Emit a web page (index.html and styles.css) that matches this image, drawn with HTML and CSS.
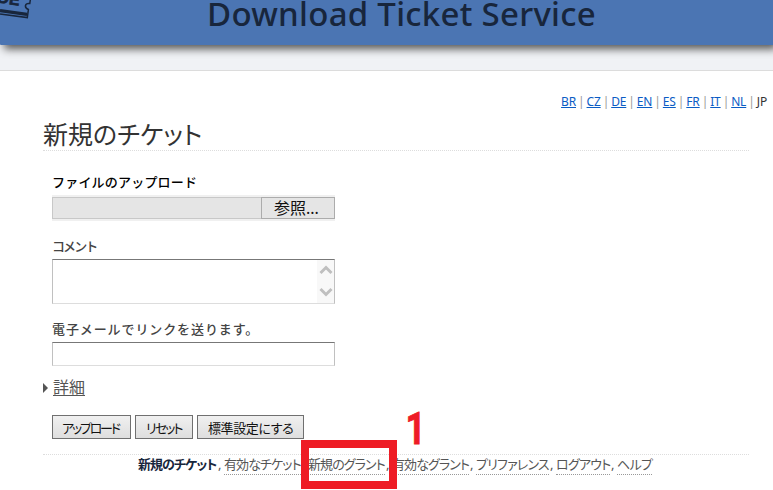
FILE: index.html
```
<!DOCTYPE html>
<html lang="ja">
<head>
<meta charset="utf-8">
<title>Download Ticket Service</title>
<link rel="stylesheet" href="styles.css">
</head>
<body>
<header class="banner">
  <svg class="logo" width="34" height="22" viewBox="0 0 34 22">
    <g fill="none" stroke="#18263c">
      <path d="M0 10.6 L27 14.4" stroke-width="3.2"/>
      <path d="M0 13.9 L27.3 17.6 L28.4 9.5 Q25 8 25.5 5.5 Q26 3 29.8 3.5 L30.3 0" stroke-width="1.5"/>
    </g>
    <text class="logo-text" transform="translate(-3 2.3) rotate(9)">DE</text>
  </svg>
  <div class="banner-title">Download Ticket Service</div>
</header>
<main class="panel">
  <nav class="langs"><a>BR</a> | <a>CZ</a> | <a>DE</a> | <a>EN</a> | <a>ES</a> | <a>FR</a> | <a>IT</a> | <a>NL</a> | <b>JP</b></nav>
  <h1><span>新規のチケット</span></h1>
  <form class="form">
    <label class="label required">ファイルのアップロード</label>
    <div class="file"><div class="file-path"></div><div class="file-button">参照...</div></div>
    <label class="label comment-label">コメント</label>
    <div class="textarea">
      <div class="scrollbar">
        <svg width="14" height="10" viewBox="0 0 14 10"><path d="M1.5 8 L7 2.5 L12.5 8"/></svg>
        <svg width="14" height="10" viewBox="0 0 14 10"><path d="M1.5 2 L7 7.5 L12.5 2"/></svg>
      </div>
    </div>
    <label class="label mail-label">電子メールでリンクを送ります。</label>
    <div class="input"></div>
    <div class="details"><i class="arrow"></i><a>詳細</a></div>
    <div class="buttons">
      <div class="btn upload"><span>アップロード</span></div>
      <div class="btn reset"><span>リセット</span></div>
      <div class="btn defaults"><span>標準設定にする</span></div>
    </div>
  </form>
  <footer class="links">
    <b class="l1">新規のチケット</b><i>,</i><a class="l2">有効なチケット</a><i>,</i><a class="l3">新規のグラント</a><i>,</i><a class="l4">有効なグラント</a><i>,</i><a class="l5">プリファレンス</a><i>,</i><a class="l6">ログアウト</a><i>,</i><a class="l7">ヘルプ</a>
  </footer>
</main>
<div class="highlight"></div>
<div class="callout">1</div>
</body>
</html>
```
FILE: styles.css
```
* { box-sizing: border-box; }
body {
  margin: 0;
  width: 773px;
  height: 490px;
  overflow: hidden;
  position: relative;
  background: #f0f2f5;
  color: #444;
  font-family: "Noto Sans", "Noto Sans CJK JP", sans-serif;
}
.banner {
  position: relative;
  height: 45px;
  background: #4b75b3;
  border-bottom-left-radius: 1px;
  box-shadow: 4px 4px 8px #555;
}
.logo { position: absolute; left: 0; top: 0; }
.logo-text { font: bold 16px "Liberation Sans", sans-serif; fill: #18263c; stroke: #18263c; stroke-width: .6; }
.banner-title {
  padding-left: 207px;
  font: 500 33px/45px "Noto Sans", sans-serif;
  letter-spacing: .27px;
  height: 45px;
  position: relative;
  top: -9px;
  color: #18263c;
  white-space: nowrap;
}
.panel {
  margin-top: 25px;
  height: 420px;
  background: #fff;
  border-top: 1px solid #dcdcdc;
  padding: 22px 24px 0 43px;
}
.langs {
  height: 18px;
  margin-right: -18px;
  text-align: right;
  white-space: nowrap;
  font: 12px/18px "Noto Sans", sans-serif;
  word-spacing: -.9px;
  letter-spacing: -.17px;
  color: #999;
}
.langs a { color: #0b5cc4; text-decoration: underline; }
.langs b { color: #333; font-weight: 400; }
h1 {
  margin: 6px 0 0;
  height: 34px;
  border-bottom: 1px dotted #ddd;
  font-weight: 400;
  font-size: 25px;
  line-height: 34px;
  color: #333;
  white-space: nowrap;
  font-feature-settings: "palt";
}
.form { padding-left: 9px; height: 281px; }
.label {
  display: block;
  height: 18px;
  line-height: 18px;
  font-size: 13px;
  font-weight: 500;
  white-space: nowrap;
}
.required { margin-top: 22px; color: #000; letter-spacing: .2px; }
.file {
  display: flex;
  width: 283px;
  height: 26px;
  margin-top: 4px;
  padding: 2px 0;
  background: #f0f0f0;
}
.file-path { width: 209px; background: #e5e5e5; border: 1px solid #c8c8c8; border-right: 0; }
.file-button {
  width: 74px;
  border: 1px solid #acacac;
  background: #e5e5e5;
  color: #111;
  font-size: 16px;
  line-height: 21px;
  padding-left: 12px;
}
.comment-label { margin-top: 16px; letter-spacing: -1.9px; }
.textarea {
  width: 283px;
  height: 45px;
  margin-top: 4px;
  border: 1px solid #c0c0c0;
  border-top-color: #777;
  border-bottom-color: #ddd;
  display: flex;
  justify-content: flex-end;
}
.scrollbar {
  width: 17px;
  background: #f8f8f8;
  display: flex;
  flex-direction: column;
  justify-content: space-between;
  align-items: center;
  padding: 5px 0 6px;
}
.scrollbar path { fill: none; stroke: #bfbfbf; stroke-width: 3; }
.mail-label { margin-top: 16px; letter-spacing: .9px; }
.input {
  width: 283px;
  height: 24px;
  margin-top: 4px;
  border: 1px solid #c0c0c0;
  border-top-color: #777;
  border-bottom-color: #ddd;
}
.details {
  display: flex;
  align-items: center;
  margin: 10px 0 0 -9px;
  height: 24px;
  color: #555;
  font-size: 16px;
}
.details a {
  line-height: 20px;
  padding-bottom: 3px;
  text-decoration: underline;
  text-underline-offset: 2px;
}
.arrow {
  border-left: 5px solid #555;
  border-top: 5px solid transparent;
  border-bottom: 5px solid transparent;
  margin-right: 5px;
}
.buttons { display: flex; gap: 4px; margin-top: 15px; }
.btn {
  height: 24px;
  border: 1px solid #707070;
  background: linear-gradient(#f0f0f0, #dedede);
  color: #111;
  font-size: 13px;
  line-height: 24px;
  padding-left: 10px;
  white-space: nowrap;
  font-feature-settings: "palt";
}
.upload { width: 79px; padding-left: 9px; letter-spacing: -2.2px; }
.reset { width: 58px; letter-spacing: -1.9px; }
.defaults { width: 107px; letter-spacing: -.4px; }
.links {
  display: flex;
  border-top: 1px dotted #ddd;
  padding: 1px 0 0 95px;
  font-size: 13px;
  line-height: 17px;
  color: #555;
  white-space: nowrap;
  font-feature-settings: "palt";
}
.links a, .links b { height: 19px; }
.links a { border-bottom: 1px dotted #999; }
.links b { color: #18263c; }
.links i { font-style: normal; width: 7px; padding-left: 1px; }
.links .l1 { width: 79px; letter-spacing: -1px; }
.l2, .l3, .l4 { width: 77px; letter-spacing: -.9px; }
.l5 { width: 73px; letter-spacing: -.8px; }
.l6 { width: 54px; letter-spacing: -.8px; }
.l7 { width: 35px; letter-spacing: -.6px; }
.highlight {
  position: absolute;
  left: 301px;
  top: 440px;
  width: 96px;
  height: 49px;
  border: 8px solid #ee1c25;
}
.callout {
  position: absolute;
  left: 405px;
  top: 405px;
  font: bold 44px/49px Roboto, sans-serif;
  transform: scaleX(.8);
  transform-origin: 2px 0;
  -webkit-text-stroke: .8px #ee1c25;
  color: #ee1c25;
}
```
